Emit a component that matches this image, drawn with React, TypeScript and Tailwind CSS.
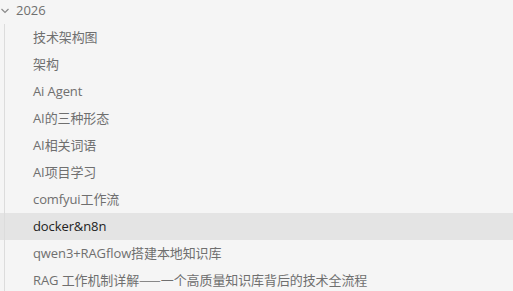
import React from 'react';

const items = [
    '技术架构图',
    '架构',
    'Ai Agent',
    'AI的三种形态',
    'AI相关词语',
    'AI项目学习',
    'comfyui工作流',
    'docker&n8n',
    'qwen3+RAGflow搭建本地知识库',
    'RAG 工作机制详解——一个高质量知识库背后的技术全流程',
];

const font = "font-['Open_Sans','Noto_Sans_CJK_SC',sans-serif]";

// em dashes look broken in the latin font, draw them with the CJK one
function Label({ text }: { text: string }) {
    const parts = text.split('——');
    if (parts.length === 1) return <>{text}</>;
    return (
        <>
            {parts[0]}
            <span className="font-['Noto_Sans_CJK_SC',sans-serif]">——</span>
            {parts[1]}
        </>
    );
}

export default function App() {
    return (
        <div className={`w-[513px] h-[291px] overflow-hidden bg-[#f5f5f5] text-[13px] ${font}`}>
            <div className="-mt-[3px] flex h-[27px] items-center text-[#6f6f6f]">
                <svg width="10" height="10" viewBox="0 0 10 10" className="mr-[6px]">
                    <path d="M1.5 3 L5 6.5 L8.5 3" fill="none" stroke="#8a8a8a" strokeWidth="1.2" />
                </svg>
                <span>2026</span>
            </div>
            <div className="flex flex-col">
                {items.map((item) => {
                    const active = item === 'docker&n8n';
                    return (
                        <div
                            key={item}
                            className={`flex h-[27px] items-center ${active ? 'bg-[#e4e4e4] text-[#222]' : 'text-[#6f6f6f]'}`}
                        >
                            <div className="ml-[4px] h-full w-px bg-[#dcdcdc]" />
                            <span className="ml-[28px] whitespace-nowrap tracking-[-0.1px]">
                                <Label text={item} />
                            </span>
                        </div>
                    );
                })}
            </div>
        </div>
    );
}
